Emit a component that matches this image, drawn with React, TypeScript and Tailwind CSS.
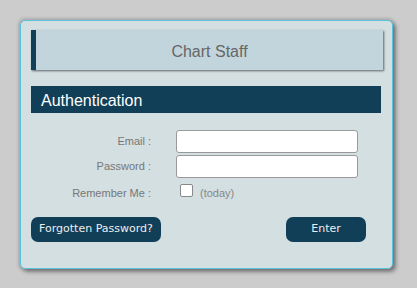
function Field({ label, children }: { label: string; children: React.ReactNode }) {
  return (
    <div className="flex items-center">
      <label className="w-[120px] text-right text-[11px] text-[#777]">{label}</label>
      <div className="ml-[25px]">{children}</div>
    </div>
  );
}

export default function App() {
  return (
    <div className="min-h-screen bg-[#cccccc] p-5 font-['Liberation_Sans',Arial,sans-serif]">
      <div className="w-[373px] h-[249px] rounded-[5px] border border-[#5bc0de] bg-[#d3dfe1] pt-[9px] pl-[10px] shadow-[0_0_3px_2px_rgba(0,0,0,0.15),3px_3px_4px_rgba(0,0,0,0.35)]">
        <div className="flex h-[40px] w-[352px] items-center justify-center border-l-[5px] border-[#123f57] bg-[#c2d5dc] pt-[3px] text-[16px] text-[#666] shadow-[1px_1px_2px_rgba(0,0,0,0.55)]">
          Chart Staff
        </div>

        <div className="mt-[16px] flex h-[27px] w-[350px] items-center bg-[#113f58] pl-[10px] pt-[2px] text-[16px] text-white">
          Authentication
        </div>

        <div className="mt-[17px] flex flex-col gap-[2px]">
          <Field label="Email :">
            <input
              type="text"
              className="block h-[23px] w-[182px] rounded-[3px] border border-[#999] bg-white outline-none"
            />
          </Field>
          <Field label="Password :">
            <input
              type="password"
              className="block h-[23px] w-[182px] rounded-[3px] border border-[#999] bg-white outline-none"
            />
          </Field>
          <div className="mt-[4px] flex items-end">
            <label className="w-[120px] text-right text-[11px] leading-[14px] text-[#777]">Remember Me :</label>
            <span className="mb-[3px] ml-[29px] block h-[13px] w-[13px] rounded-[2px] border border-[#888] bg-white" />
            <span className="ml-[7px] text-[11px] leading-[14px] text-[#888]">(today)</span>
          </div>
        </div>

        <div className="mt-[17px] flex w-[335px] items-center justify-between font-['DejaVu_Sans',Verdana,sans-serif]">
          <button className="h-[25px] w-[130px] rounded-[7px] bg-[#113f58] text-[11px] text-[#eee]">
            Forgotten Password?
          </button>
          <button className="h-[25px] w-[80px] rounded-[7px] bg-[#113f58] text-[11px] text-[#eee]">
            Enter
          </button>
        </div>
      </div>
    </div>
  );
}
